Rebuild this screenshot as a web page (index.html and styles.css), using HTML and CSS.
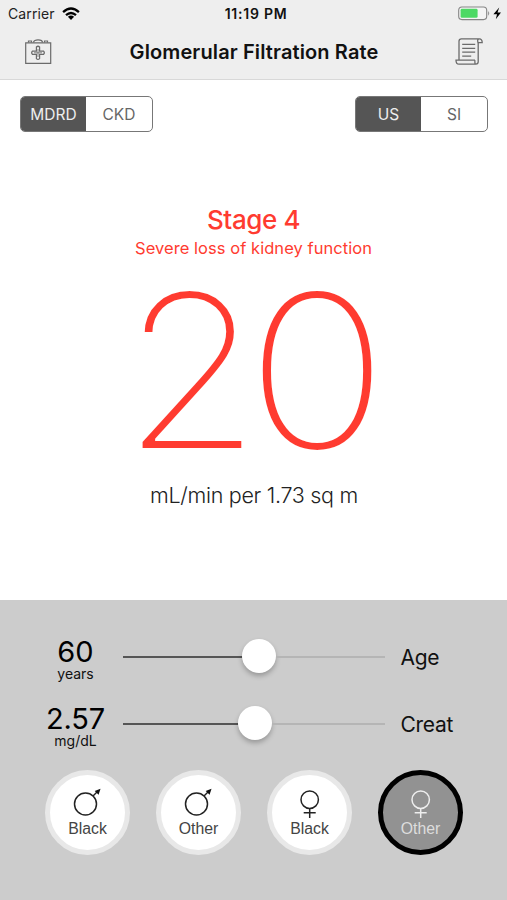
FILE: index.html
```html
<!DOCTYPE html>
<html lang="en">
<head>
<meta charset="utf-8">
<title>Glomerular Filtration Rate</title>
<link rel="stylesheet" href="styles.css">
</head>
<body>
<main class="app">
  <header class="top">
    <div class="status">
      <div class="carrier"><span>Carrier</span>
        <svg width="18" height="14" viewBox="0 0 18 14" fill="none" stroke="#000" stroke-width="2.3"><path d="M1.1 5.1Q9-2.1 16.9 5.1M4 8.2Q9 3.8 14 8.2"/><path d="M5.9 9.8Q9 7.2 12.1 9.8L9 13Z" fill="#000" stroke="none"/></svg>
      </div>
      <div class="clock">11:19 PM</div>
      <div class="power">
        <svg width="45" height="16" viewBox="0 0 45 16"><rect x="1.7" y="1" width="28" height="12.6" rx="3.3" fill="#f4f4f4" stroke="#858585" stroke-width="1.1"/><rect x="3.6" y="2.8" width="17" height="9" rx="1.4" fill="#4cd964"/><path d="M31.2 5q2 2.4 0 4.8z" fill="#858585"/><path d="M42.2 1.5L36.4 8.3h3.6l-1.2 5 5.2-6.8h-3.5z" fill="#000"/></svg>
      </div>
    </div>
    <nav class="nav">
      <svg class="kit" width="28" height="28" viewBox="0 0 28 28" fill="none" stroke="#6b6b6b" stroke-width="1.2"><path d="M1.7 4.8h25v20.5h-25z"/><path d="M9.5 4.5C9.5 1 18.5 1 18.5 4.5M4.5 4.5V3h3v1.500M20.500 4.500V3h3v1.500"/><path d="M12.400 9q1.600-1.500 3.200 0v4.200h4q1.500 1.600 0 3.200h-4v4.200q-1.600 1.500-3.200 0v-4.200h-4q-1.500-1.600 0-3.200h4z"/><path d="M14 11v8M10 14.800h8" stroke-width=".8"/></svg>
      <h1>Glomerular Filtration Rate</h1>
      <svg class="scroll" width="30" height="30" viewBox="0 0 30 30" fill="none" stroke="#6b6b6b" stroke-width="1.3"><path d="M5 23V4.200Q5 1.800 7.400 1.800H25.300M24.200 5.700V25M25.300 1.800Q28.200 1.800 28.200 5.700H24Q22.900 1.800 25.300 1.800M21 23.200H2Q2 27.200 5 27.200H21.800Q24.200 27.200 24.200 24.800M21 23.200Q20.400 27.200 22.200 27.200"/><path d="M8.200 7.400h13M8.200 11.300h13M8.200 15.200h13M8.200 19.100h9"/></svg>
    </nav>
  </header>

  <section class="modes">
    <div class="segments"><button class="segment on">MDRD</button><button class="segment">CKD</button></div>
    <div class="segments"><button class="segment on">US</button><button class="segment">SI</button></div>
  </section>

  <section class="result">
    <h2 class="stage">Stage 4</h2>
    <p class="meaning">Severe loss of kidney function</p>
    <div class="rate"><span class="tens">2</span><span class="ones">0</span></div>
    <p class="unit">mL/min per 1.73 sq m</p>
  </section>

  <section class="controls">
    <div class="row">
      <div class="reading"><b class="value age">60</b><span class="small years">years</span></div>
      <div class="slider"><i class="done age-done"></i><i class="knob"></i><i class="rest"></i></div>
      <div class="label">Age</div>
    </div>
    <div class="row">
      <div class="reading"><b class="value creat">2.57</b><span class="small mgdl">mg/dL</span></div>
      <div class="slider"><i class="done creat-done"></i><i class="knob"></i><i class="rest"></i></div>
      <div class="label">Creat</div>
    </div>
    <div class="choices">
      <button class="choice"><svg width="32" height="32" viewBox="0 0 32 32"><circle cx="13.500" cy="18" r="11" fill="none" stroke="#222" stroke-width="1.500"/><path d="M21 10L25.500 5.500" stroke="#222" stroke-width="1.500"/><path d="M28.500 2.700L22.700 5 26.600 8.800z" fill="#111"/></svg><span>Black</span></button>
      <button class="choice"><svg width="32" height="32" viewBox="0 0 32 32"><circle cx="13.500" cy="18" r="11" fill="none" stroke="#222" stroke-width="1.500"/><path d="M21 10L25.500 5.500" stroke="#222" stroke-width="1.500"/><path d="M28.500 2.700L22.700 5 26.600 8.800z" fill="#111"/></svg><span>Other</span></button>
      <button class="choice"><svg width="32" height="32" viewBox="0 0 32 32" fill="none" stroke="#222" stroke-width="1.500"><circle cx="15.700" cy="13.700" r="8.700"/><path d="M15.700 22.400V32M9.700 26.700h12"/></svg><span>Black</span></button>
      <button class="choice chosen"><svg width="32" height="32" viewBox="0 0 32 32" fill="none" stroke="#eee" stroke-width="1.500"><circle cx="15.700" cy="13.700" r="8.700"/><path d="M15.700 22.400V32M9.700 26.700h12"/></svg><span>Other</span></button>
    </div>
  </section>
</main>
</body>
</html>
```
FILE: styles.css
```css
* { box-sizing: border-box; }
body { margin: 0; background: #fff; font-family: Inter, "Liberation Sans", sans-serif; color: #111; }
h1, h2, p { margin: 0; font-weight: 400; }
button { padding: 0; border: 0; background: none; font: inherit; color: inherit; }
svg { display: block; flex: none; }
.app { width: 507px; height: 900px; display: flex; flex-direction: column; overflow: hidden; }

.top { height: 80px; background: #eee; border-bottom: 1px solid #d8d8d8; }
.status { height: 27px; padding: 0 5px 0 8px; display: grid; grid-template-columns: 1fr auto 1fr; align-items: center; }
.carrier { display: flex; align-items: center; gap: 7px; font-size: 14px; letter-spacing: .1px; color: #222; }
.clock { margin-left: 2px; font-size: 14px; font-weight: 600; letter-spacing: .75px; }
.power { justify-self: end; }
.nav { height: 50px; padding: 0 23px 0 24px; display: flex; align-items: center; justify-content: space-between; }
.nav h1 { margin-left: 2px; font-size: 20px; font-weight: 600; line-height: 51px; letter-spacing: .12px; white-space: nowrap; }

.modes { padding: 16px 19px 0 20px; display: flex; justify-content: space-between; }
.segments { width: 133px; height: 36px; display: grid; grid-template-columns: 65px 1fr; border: 1px solid #777; border-radius: 5px; overflow: hidden; }
.segment { font-size: 15.5px; color: #666; }
.segment.on { background: #555; color: #eee; }

.result { height: 468px; padding-top: 71px; display: flex; flex-direction: column; align-items: center; color: #ff3b30; white-space: nowrap; }
.stage { font-size: 26px; font-weight: 500; line-height: 34px; letter-spacing: -.4px; }
.meaning { font-size: 16.5px; line-height: 23px; letter-spacing: .05px; }
.rate { height: 221px; display: flex; font-size: 215.5px; font-weight: 200; line-height: 222px; -webkit-text-stroke: 2.2px #fff; }
.tens { transform: scaleX(1.05); }
.ones { margin-left: -6px; transform: scaleX(1.1); }
.unit { margin-left: 1px; font-size: 21.5px; font-weight: 300; line-height: 29px; letter-spacing: -.3px; color: #222; }

.controls { height: 300px; flex: none; padding-top: 26px; background: #ccc; }
.row { height: 67px; display: grid; grid-template-columns: 75px 262px 80px; column-gap: 10px; padding-left: 38px; }
.reading { display: flex; flex-direction: column; align-items: center; padding-top: 10px; }
.value { font-size: 29px; line-height: 31px; font-weight: 400; color: #000; }
.creat { letter-spacing: -.2px; }
.small { font-size: 14px; line-height: 14px; }
.slider { width: 262px; height: 62px; display: flex; align-items: center; }
.done { height: 2px; background: #555; }
.age-done { width: 119px; }
.creat-done { width: 115px; }
.knob { width: 34px; height: 34px; margin: -2px 0 0; flex: none; border-radius: 50%; background: #fff; box-shadow: 0 3px 5px rgba(0,0,0,.25); }
.rest { height: 2px; flex: 1; background: #b5b5b5; }
.label { margin-left: 5.5px; font-size: 21px; line-height: 63px; letter-spacing: -.3px; }
.choices { display: flex; gap: 26px; padding: 10px 0 0 45px; }
.choice { width: 85px; height: 85px; flex: none; border: 5px solid #e8e8e8; border-radius: 50%; background: #fff; display: flex; flex-direction: column; align-items: center; font-family: "Liberation Sans", sans-serif; font-size: 15.8px; line-height: 20px; color: #444; padding-top: 11px; }
.choice span { padding-top: 1px; }
.chosen { background: #929292; border-color: #000; color: #ddd; }
```
